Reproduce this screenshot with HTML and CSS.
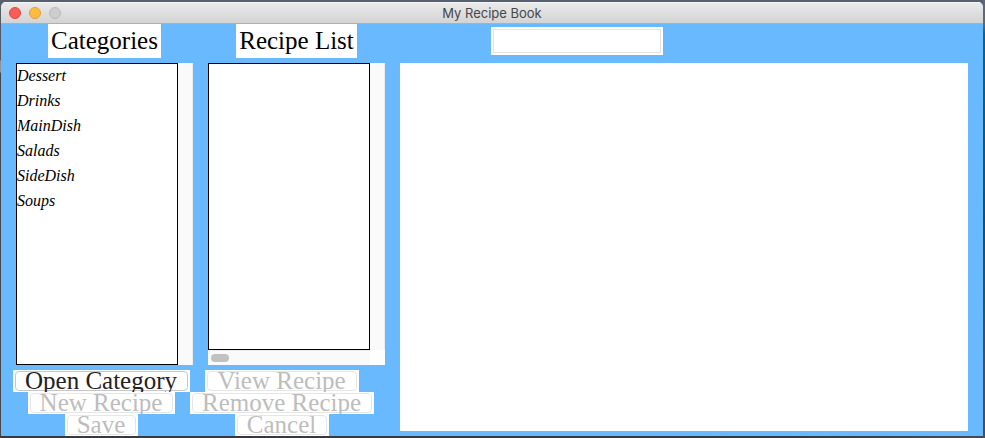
FILE: index.html
```html
<!DOCTYPE html>
<html lang="en">
<head>
<meta charset="utf-8">
<title>My Recipe Book</title>
<link rel="stylesheet" href="styles.css">
</head>
<body>
<div class="window">
  <header class="titlebar">
    <div class="lights">
      <button class="light close" type="button" aria-label="Close"></button>
      <button class="light minimize" type="button" aria-label="Minimize"></button>
      <button class="light zoom" type="button" aria-label="Zoom" disabled></button>
    </div>
    <h1 class="title">My Recipe Book</h1>
  </header>
  <main class="content">
    <section class="browser">
      <div class="lists">
        <div class="column">
          <label class="heading" for="categories">Categories</label>
          <div class="pane">
            <select class="list" id="categories" size="6">
              <option>Dessert</option>
              <option>Drinks</option>
              <option>MainDish</option>
              <option>Salads</option>
              <option>SideDish</option>
              <option>Soups</option>
            </select>
            <div class="track"></div>
          </div>
        </div>
        <div class="column">
          <label class="heading" for="recipes">Recipe List</label>
          <div class="pane scroll-x">
            <select class="list" id="recipes" size="6"></select>
            <div class="track"></div>
            <div class="track-x"><div class="thumb"></div></div>
          </div>
        </div>
      </div>
      <div class="actions">
        <div class="action"><button class="btn" type="button">Open Category</button></div>
        <div class="action"><button class="btn" type="button" disabled>View Recipe</button></div>
        <div class="action"><button class="btn" type="button" disabled>New Recipe</button></div>
        <div class="action"><button class="btn" type="button" disabled>Remove Recipe</button></div>
        <div class="action"><button class="btn" type="button" disabled>Save</button></div>
        <div class="action"><button class="btn" type="button" disabled>Cancel</button></div>
      </div>
    </section>
    <section class="editor">
      <div class="name-row">
        <div class="name-box"><input class="name" type="text" aria-label="Recipe name"></div>
      </div>
      <textarea class="text" aria-label="Recipe text"></textarea>
    </section>
  </main>
</div>
</body>
</html>
```
FILE: styles.css
```css
* {
  box-sizing: border-box;
}

body {
  margin: 0;
  min-height: 100vh;
  padding: 2px 2px 2px 1px;
  display: flex;
  background:
    linear-gradient(#5f6875 0 24px, #0f6385 34px, #174f69 50%, #4a4f57 85%) right / 2px 100% no-repeat,
    linear-gradient(#58606d, #58606d) top / 100% 8px no-repeat,
    linear-gradient(90deg, #38393f 0 65%, #2f3c43 80%, #484b50) bottom / 100% 2px no-repeat,
    linear-gradient(#555b66 0 60px, #8f9296 61px 72px, #44474e 73px);
}

.window {
  flex: 1;
  display: flex;
  flex-direction: column;
  border-radius: 5px 5px 0 0;
  overflow: hidden;
  background: #69b9ff;
}

.titlebar {
  height: 22px;
  display: grid;
  grid-template-columns: 1fr auto 1fr;
  align-items: center;
  padding: 0 8px;
  background: linear-gradient(#ebebeb, #d3d3d3);
  border-bottom: 1px solid #b0b0b0;
  box-shadow: inset 0 1px #f6f6f6;
}

.lights {
  display: flex;
  gap: 8px;
}

.light {
  width: 12px;
  height: 12px;
  padding: 0;
  border: 1px solid;
  border-radius: 50%;
}

.close {
  background: #fc5b57;
  border-color: #e2463f;
}

.minimize {
  background: #fdbc40;
  border-color: #e0a032;
}

.zoom {
  background: #cdcdcd;
  border-color: #b9b9b9;
}

.title {
  margin: 0;
  font: 400 13px/20px Inter, "Liberation Sans", sans-serif;
  color: #464646;
}

.content {
  flex: 1;
  display: flex;
  gap: 15px;
  padding: 0 15px;
}

.browser {
  display: flex;
  flex-direction: column;
  width: 369px;
  gap: 5px;
}

.lists {
  flex: 1;
  display: flex;
  gap: 15px;
}

.column {
  flex: 1;
  display: flex;
  flex-direction: column;
  gap: 5px;
}

.heading {
  align-self: center;
  padding: 0 3px;
  background: #fff;
  font: 25px/34px "Liberation Serif", serif;
  color: #000;
}

.pane {
  flex: 1;
  display: grid;
  grid-template-columns: 1fr 15px;
  background: #fff;
}

.scroll-x {
  grid-template-rows: 1fr 15px;
}

.list {
  appearance: none;
  width: 100%;
  height: 100%;
  margin: 0;
  padding: 0;
  border: 1px solid #000;
  border-radius: 0;
  outline: none;
  overflow: hidden;
  background: #fff;
  color: #000;
  font: italic 16px "Apple Chancery", "Liberation Serif", serif;
}

.list option {
  min-height: 25px;
  padding: 3px 0 4px;
}

.track {
  background: #fafafa;
  border-right: 1px solid #ededed;
}

.track-x {
  display: flex;
  align-items: center;
  padding: 0 3px;
  background: #fafafa;
  border-top: 1px solid #ededed;
}

.thumb {
  width: 18px;
  height: 8px;
  border-radius: 4px;
  background: #c1c1c1;
}

.actions {
  align-self: flex-start;
  display: grid;
  grid-template-columns: auto auto;
  grid-auto-rows: 22px;
  justify-items: center;
  margin-left: -3px;
}

.action {
  padding: 1px 2px;
  overflow: hidden;
  background: #fff;
}

.btn {
  display: block;
  height: 20px;
  padding: 0 10px 0 9px;
  border: 1px solid #c8c8c8;
  border-radius: 4px;
  background: #fff;
  font: 25px/18px "Liberation Serif", serif;
  color: #222;
  white-space: nowrap;
}

.btn:disabled {
  border-color: #e6e6e6;
  color: #bdbdbd;
}

.editor {
  flex: 1;
  display: flex;
  flex-direction: column;
  padding-bottom: 5px;
}

.name-row {
  height: 39px;
  padding: 3px 16%;
}

.name-box {
  width: fit-content;
  padding: 2px;
  background: #fff;
}

.name {
  display: block;
  width: 168px;
  height: 24px;
  padding: 0 4px;
  border: 1px solid #e3e3e3;
  background: #fff;
  font: 14px "Liberation Sans", sans-serif;
}

.text {
  flex: 1;
  width: 100%;
  padding: 4px;
  border: 0;
  resize: none;
  background: #fff;
  font: 16px "Liberation Serif", serif;
}
```
